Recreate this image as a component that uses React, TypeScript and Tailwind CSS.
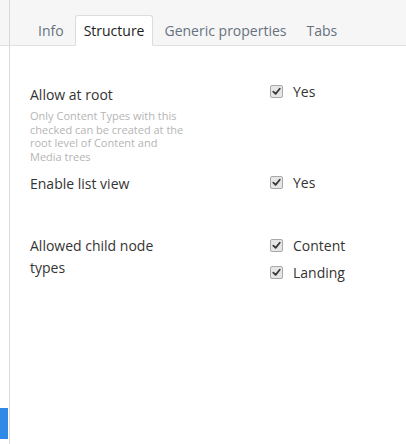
import React from 'react';

// 체크박스 (비활성 느낌의 회색 체크박스)
const Check = () => (
  <span className="inline-flex w-[13px] h-[13px] rounded-[2px] border border-[#a9a9a9] bg-[#e6e6e6] items-center justify-center shrink-0">
    <svg width="9" height="9" viewBox="0 0 10 10">
      <path d="M1.5 5.2 L4 7.6 L8.6 2" fill="none" stroke="#3a3a3a" strokeWidth={2} strokeLinecap="round" strokeLinejoin="round" />
    </svg>
  </span>
);

const CheckItem = ({ label }: { label: string }) => (
  <div className="flex items-center h-[27px]">
    <Check />
    <span className="ml-[10px] text-[14px] text-[#343434]">{label}</span>
  </div>
);

const tabs = ['Info', 'Structure', 'Generic properties', 'Tabs'];

export default function App() {
  return (
    <div
      className="w-[406px] h-[444px] flex bg-white overflow-hidden"
      style={{ fontFamily: '"Open Sans", "Noto Sans", sans-serif' }}
    >
      {/* 왼쪽 얇은 띠 */}
      <div className="w-[10px] flex flex-col border-r border-[#d9d9d9] shrink-0">
        <div className="h-[46px] bg-[#f6f6f6] border-b border-[#e1e1e1]" />
        <div className="flex-1" />
        <div className="h-[31px] bg-[#2e8ae6] mr-[1px]" />
        <div className="h-[5px]" />
      </div>

      <div className="flex-1 flex flex-col">
        {/* 탭 헤더 */}
        <div className="h-[46px] bg-[#f6f6f6] border-b border-[#e1e1e1] flex items-end pl-[19px]">
          {tabs.map((t) => {
            const active = t === 'Structure';
            return (
              <div
                key={t}
                className={`h-[31px] px-[8px] mr-[2px] mb-[-1px] flex items-center text-[14px] rounded-t-[3px] border ${
                  active
                    ? 'bg-white border-[#dcdcdc] border-b-white text-[#1d1d1d]'
                    : 'border-transparent text-[#66727f]'
                }`}
              >
                {t}
              </div>
            );
          })}
        </div>

        {/* 본문 */}
        <div className="pl-[20px] pt-[36px]">
          <div className="flex">
            <div className="w-[240px] pr-[85px]">
              <div className="text-[14px] text-[#343434] leading-[20px] pt-[3px]">Allow at root</div>
              <div className="text-[11px] text-[#b5b5b5] leading-[13.5px] mt-[4px]">
                Only Content Types with this checked can be created at the root level of Content and Media trees
              </div>
            </div>
            <div className="mt-[-4px]">
              <CheckItem label="Yes" />
            </div>
          </div>

          <div className="flex mt-[11px]">
            <div className="w-[240px] pr-[85px] text-[14px] text-[#343434] leading-[20px]">Enable list view</div>
            <div className="mt-[-5px]">
              <CheckItem label="Yes" />
            </div>
          </div>

          <div className="flex mt-[36px]">
            <div className="w-[240px] pr-[85px] text-[14px] text-[#343434] leading-[22px] pt-[3px]">
              Allowed child node types
            </div>
            <div>
              <CheckItem label="Content" />
              <CheckItem label="Landing" />
            </div>
          </div>
        </div>
      </div>
    </div>
  );
}
